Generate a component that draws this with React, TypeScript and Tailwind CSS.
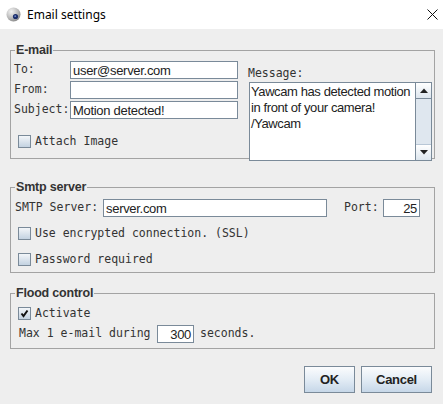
import React from "react";

const mono = { fontFamily: '"DejaVu Sans Mono", "Liberation Mono", monospace' };
const sans = { fontFamily: '"Liberation Sans", Arial, sans-serif' };

function Check({ checked = false }: { checked?: boolean }) {
  return (
    <div className="w-[13px] h-[13px] shrink-0 border border-[#7a8a99] bg-gradient-to-b from-[#f3f6f9] to-[#c3d2e1] flex items-center justify-center">
      {checked && (
        <svg width="9" height="9" viewBox="0 0 9 9">
          <path d="M1.5 4.5 L3.5 7 L7.5 1.5" stroke="#111" strokeWidth="2" fill="none" />
        </svg>
      )}
    </div>
  );
}

function Field({ w, value = "", right = false }: { w: string; value?: string; right?: boolean }) {
  return (
    <div
      className={`${w} h-[18px] border border-[#7a8a99] bg-white flex items-center px-[2px] text-[13px] tracking-[-0.3px] text-[#222] leading-none ${right ? "justify-end" : ""}`}
      style={sans}
    >
      {value}
    </div>
  );
}

function Group({ title, h, children }: { title: string; h: string; children: React.ReactNode }) {
  return (
    <div className={`relative w-[425px] ${h} border border-[#a3a3a3]`}>
      <div
        className="absolute left-[4px] top-[-8px] bg-[#eeeeee] px-[1px] text-[12.5px] font-bold leading-[14px] text-[#333] tracking-[-0.2px]"
        style={sans}
      >
        {title}
      </div>
      {children}
    </div>
  );
}

export default function App() {
  return (
    <div className="w-[443px] h-[404px] bg-[#eeeeee] flex flex-col overflow-hidden">
      {/* title bar */}
      <div className="h-[29px] bg-white flex items-center shrink-0">
        <svg className="ml-[6px]" width="15" height="15" viewBox="0 0 15 15">
          <defs>
            <radialGradient id="g" cx="0.35" cy="0.3" r="0.8">
              <stop offset="0" stopColor="#f4f4f4" />
              <stop offset="0.6" stopColor="#b9b9b9" />
              <stop offset="1" stopColor="#7d7d7d" />
            </radialGradient>
          </defs>
          <circle cx="7.5" cy="7.5" r="7" fill="url(#g)" />
          <circle cx="9.5" cy="9.5" r="2.6" fill="#1c2f6b" />
          <circle cx="9.2" cy="9.2" r="0.9" fill="#6f86c9" />
        </svg>
        <span className="ml-[6px] text-[12px] text-black" style={{ fontFamily: '"Noto Sans", "Open Sans", sans-serif' }}>
          Email settings
        </span>
        <svg className="ml-auto mr-[5px]" width="11" height="11" viewBox="0 0 11 11">
          <path d="M0.5 0.5 L10.5 10.5 M10.5 0.5 L0.5 10.5" stroke="#111" strokeWidth="1" />
        </svg>
      </div>

      <div className="flex flex-col pl-[10px] pt-[21px]">
        {/* E-mail */}
        <Group title="E-mail" h="h-[109px]">
          <div className="flex">
            <div className="flex flex-col pl-[3px] pt-[10px]">
              {[
                ["To:", "user@server.com"],
                ["From:", ""],
                ["Subject:", "Motion detected!"],
              ].map(([l, v], i) => (
                <div key={i} className={`flex items-center ${i ? "mt-[2px]" : ""}`}>
                  <div className="w-[56px] text-[11.5px] text-[#333] leading-none" style={mono}>
                    {l}
                  </div>
                  <Field w="w-[168px]" value={v} />
                </div>
              ))}
              <div className="flex items-center mt-[16px] ml-[4px]">
                <Check />
                <span className="ml-[4px] text-[11.5px] text-[#333] leading-none" style={mono}>
                  Attach Image
                </span>
              </div>
            </div>
            <div className="flex flex-col ml-[10px] pt-[15px]">
              <div className="text-[11.5px] text-[#333] leading-[14px]" style={mono}>
                Message:
              </div>
              <div className="mt-[2px] ml-[1px] w-[183px] h-[79px] border border-[#7a8a99] bg-white flex">
                <div
                  className="flex-1 text-[13px] tracking-[-0.4px] leading-[16px] text-[#222] pl-[1px] pt-[1px]"
                  style={sans}
                >
                  <div>Yawcam has detected motion</div>
                  <div>in front of your camera!</div>
                  <div>/Yawcam</div>
                </div>
                <div className="w-[16px] border-l border-[#7a8a99] flex flex-col bg-[#eeeeee]">
                  <div className="h-[16px] border-b border-[#7a8a99] bg-gradient-to-b from-white to-[#dde6ee] flex items-center justify-center">
                    <svg width="8" height="5" viewBox="0 0 8 5"><path d="M0 5 L4 0.5 L8 5 Z" fill="#222" /></svg>
                  </div>
                  <div className="flex-1 bg-[#dfe7ef] border-b border-[#b8c7d6]" />
                  <div className="h-[15px] bg-gradient-to-b from-white to-[#dde6ee] flex items-center justify-center">
                    <svg width="8" height="5" viewBox="0 0 8 5"><path d="M0 0 L4 4.5 L8 0 Z" fill="#222" /></svg>
                  </div>
                </div>
              </div>
            </div>
          </div>
        </Group>

        {/* Smtp server */}
        <div className="mt-[28px]">
          <Group title="Smtp server" h="h-[86px]">
            <div className="flex flex-col pl-[4px] pt-[11px]">
              <div className="flex items-center">
                <span className="text-[11.5px] text-[#333] leading-none w-[88px]" style={mono}>
                  SMTP Server:
                </span>
                <Field w="w-[224px]" value="server.com" />
                <span className="ml-[17px] w-[39px] text-[11.5px] text-[#333] leading-none" style={mono}>
                  Port:
                </span>
                <Field w="w-[37px]" value="25" right />
              </div>
              <div className="flex items-center mt-[10px] ml-[3px]">
                <Check />
                <span className="ml-[4px] text-[11.5px] text-[#333] leading-none" style={mono}>
                  Use encrypted connection. (SSL)
                </span>
              </div>
              <div className="flex items-center mt-[13px] ml-[3px]">
                <Check />
                <span className="ml-[4px] text-[11.5px] text-[#333] leading-none" style={mono}>
                  Password required
                </span>
              </div>
            </div>
          </Group>
        </div>

        {/* Flood control */}
        <div className="mt-[20px]">
          <Group title="Flood control" h="h-[56px]">
            <div className="flex flex-col pl-[7px] pt-[13px]">
              <div className="flex items-center">
                <Check checked />
                <span className="ml-[4px] text-[11.5px] text-[#333] leading-none" style={mono}>
                  Activate
                </span>
              </div>
              <div className="flex items-center mt-[5px] ml-[1px]">
                <span className="text-[11.5px] text-[#333] leading-none w-[138px]" style={mono}>
                  Max 1 e-mail during
                </span>
                <Field w="w-[37px]" value="300" right />
                <span className="ml-[6px] text-[11.5px] text-[#333] leading-none" style={mono}>
                  seconds.
                </span>
              </div>
            </div>
          </Group>
        </div>

        {/* buttons */}
        <div className="flex justify-end pr-[11px] mt-[17px] gap-[6px]">
          {["OK", "Cancel"].map((b) => (
            <div
              key={b}
              className={`${b === "OK" ? "w-[51px]" : "w-[71px]"} h-[27px] border border-[#7a8a99] bg-gradient-to-b from-[#fbfcfd] via-[#e3ecf5] to-[#c6d7e8] flex items-center justify-center text-[13px] font-bold text-[#222] tracking-[-0.3px]`}
              style={sans}
            >
              {b}
            </div>
          ))}
        </div>
      </div>
    </div>
  );
}
